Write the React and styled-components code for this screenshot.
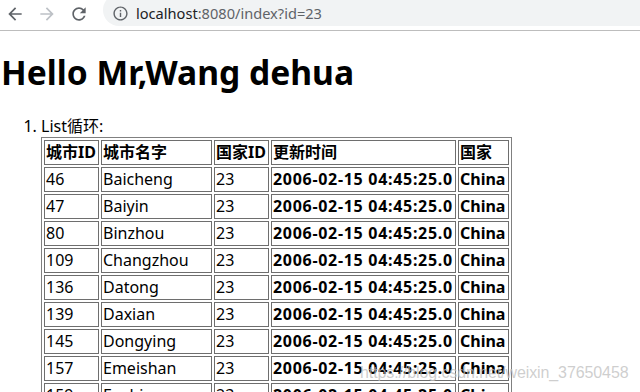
import React from "react";
import styled, { createGlobalStyle } from "styled-components";

const Global = createGlobalStyle`
  html, body { margin: 0; padding: 0; overflow: hidden; background: #fff; }
  body { font-family: "Noto Sans", "Noto Sans CJK SC", sans-serif; color: #000; }
`;

const Frame = styled.div`
  position: relative;
  width: 640px;
  height: 392px;
  overflow: hidden;
  display: flex;
  flex-direction: column;
`;

const Toolbar = styled.div`
  height: 30px;
  flex: none;
  display: flex;
  align-items: flex-start;
  gap: 2px;
  border-bottom: 1px solid #bdbdbd;
  background: #fff;
`;

const NavButton = styled.div`
  width: 30px;
  height: 27px;
  display: flex;
  align-items: center;
  justify-content: center;
  color: ${(p) => (p.$disabled ? "#bdc1c6" : "#5f6368")};
`;

const Omnibox = styled.div`
  flex: 1;
  margin-left: 7px;
  margin-top: -6px;
  height: 32px;
  border-radius: 16px 0 0 16px;
  background: #f1f3f4;
  display: flex;
  align-items: center;
  padding: 6px 0 0 9px;
  box-sizing: border-box;
  gap: 7px;
  color: #5f6368;
`;

const Url = styled.span`
  font-family: "Noto Sans", sans-serif;
  font-size: 14.6px;
  color: #5f6368;
  white-space: nowrap;
`;

const Host = styled.span`
  color: #202124;
`;

const Page = styled.div`
  padding-left: 1px;
  flex: 1;
`;

const Title = styled.h1`
  margin: 20px 0 0;
  font-size: 33.6px;
  line-height: 43px;
  font-weight: 700;
`;

const List = styled.ol`
  margin: 22px 0 0;
  padding-left: 40px;
  font-size: 16px;
  line-height: 21px;
`;

const Table = styled.table`
  box-sizing: border-box;
  width: 471px;
  table-layout: fixed;
  border-collapse: separate;
  border-spacing: 2px;
  border: 1px solid #808080;
`;

const Cell = styled.td`
  box-sizing: border-box;
  width: ${(p) => p.$w}px;
  height: 25px;
  padding: 1px;
  border: 1px solid #6e6e6e;
  font-size: 16px;
  line-height: 21px;
  font-weight: ${(p) => (p.$bold ? 700 : 400)};
  letter-spacing: ${(p) => p.$spacing || 0}px;
  text-align: left;
  white-space: nowrap;
  vertical-align: middle;
`;

const Watermark = styled.div`
  position: absolute;
  left: 360px;
  top: 364px;
  font-family: "Liberation Sans", Arial, sans-serif;
  font-size: 16px;
  letter-spacing: -0.1px;
  color: rgba(190, 190, 190, 0.75);
  white-space: nowrap;
  pointer-events: none;
`;

const widths = [55, 111, 55, 185, 51];
const headers = ["城市ID", "城市名字", "国家ID", "更新时间", "国家"];
const rows = [
  ["46", "Baicheng"],
  ["47", "Baiyin"],
  ["80", "Binzhou"],
  ["109", "Changzhou"],
  ["136", "Datong"],
  ["139", "Daxian"],
  ["145", "Dongying"],
  ["157", "Emeishan"],
  ["159", "Enshi"],
];

const BackIcon = () => (
  <svg width="20" height="20" viewBox="0 0 24 24" fill="currentColor">
    <path d="M20 11H7.83l5.59-5.59L12 4l-8 8 8 8 1.41-1.41L7.83 13H20v-2z" />
  </svg>
);
const ForwardIcon = () => (
  <svg width="20" height="20" viewBox="0 0 24 24" fill="currentColor">
    <path d="M4 11h12.17l-5.59-5.59L12 4l8 8-8 8-1.41-1.41L16.17 13H4v-2z" />
  </svg>
);
const ReloadIcon = () => (
  <svg width="20" height="20" viewBox="0 0 24 24" fill="currentColor">
    <path d="M17.65 6.35C16.2 4.9 14.21 4 12 4c-4.42 0-7.99 3.58-7.99 8s3.57 8 7.99 8c3.73 0 6.84-2.55 7.73-6h-2.08c-.82 2.33-3.04 4-5.65 4-3.31 0-6-2.69-6-6s2.69-6 6-6c1.66 0 3.14.69 4.22 1.78L13 11h7V4l-2.35 2.35z" />
  </svg>
);
const InfoIcon = () => (
  <svg width="17" height="17" viewBox="0 0 24 24" fill="currentColor">
    <path d="M11 7h2v2h-2zm0 4h2v6h-2zm1-9C6.48 2 2 6.48 2 12s4.48 10 10 10 10-4.48 10-10S17.52 2 12 2zm0 18c-4.41 0-8-3.59-8-8s3.59-8 8-8 8 3.59 8 8-3.59 8-8 8z" />
  </svg>
);

export default function App() {
  return (
    <Frame>
      <Global />
      <Toolbar>
        <NavButton><BackIcon /></NavButton>
        <NavButton $disabled><ForwardIcon /></NavButton>
        <NavButton><ReloadIcon /></NavButton>
        <Omnibox>
          <InfoIcon />
          <Url><Host>localhost</Host>:8080/index?id=23</Url>
        </Omnibox>
      </Toolbar>
      <Page>
        <Title>Hello Mr,Wang dehua</Title>
        <List>
          <li>
            List循环:
            <Table>
              <tbody>
                <tr>
                  {headers.map((h, i) => (
                    <Cell key={h} $w={widths[i]} $bold>{h}</Cell>
                  ))}
                </tr>
                {rows.map(([id, name]) => (
                  <tr key={id}>
                    <Cell $w={widths[0]}>{id}</Cell>
                    <Cell $w={widths[1]}>{name}</Cell>
                    <Cell $w={widths[2]}>23</Cell>
                    <Cell $w={widths[3]} $bold $spacing={0.7}>2006-02-15 04:45:25.0</Cell>
                    <Cell $w={widths[4]} $bold>China</Cell>
                  </tr>
                ))}
              </tbody>
            </Table>
          </li>
        </List>
      </Page>
      <Watermark>https://blog.csdn.net/weixin_37650458</Watermark>
    </Frame>
  );
}
